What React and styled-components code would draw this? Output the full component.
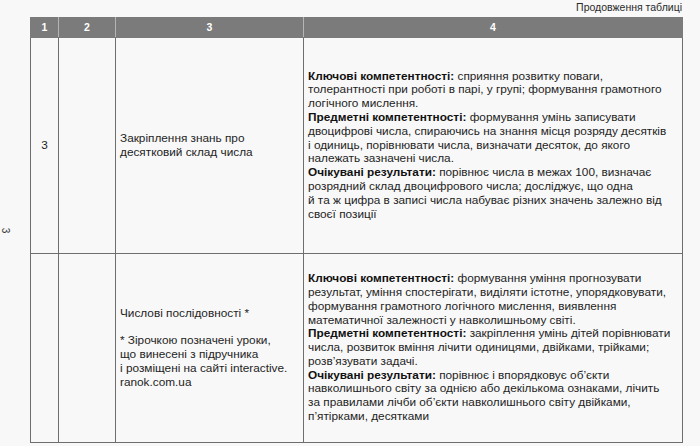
import styled, { createGlobalStyle } from 'styled-components'

const GlobalStyle = createGlobalStyle`
  html, body {
    margin: 0;
    padding: 0;
    background: #f8f8f8;
  }
  body {
    font-family: "Liberation Sans", Arial, sans-serif;
    color: #1e1e1e;
  }
`

const rows = [
  {
    num: '3',
    height: 216,
    topic: [['Закріплення знань про', 'десятковий склад числа']],
    blocks: [
      {
        label: 'Ключові компетентності:',
        lines: [
          'сприяння розвитку поваги,',
          'толерантності при роботі в парі, у групі; формування грамотного',
          'логічного мислення.'
        ]
      },
      {
        label: 'Предметні компетентності:',
        lines: [
          'формування умінь записувати',
          'двоцифрові числа, спираючись на знання місця розряду десятків',
          'і одиниць, порівнювати числа, визначати десяток, до якого',
          'належать зазначені числа.'
        ]
      },
      {
        label: 'Очікувані результати:',
        lines: [
          'порівнює числа в межах 100, визначає',
          'розрядний склад двоцифрового числа; досліджує, що одна',
          'й та ж цифра в записі числа набуває різних значень залежно від',
          'своєї позиції'
        ]
      }
    ]
  },
  {
    num: '',
    height: 189,
    topic: [
      ['Числові послідовності *'],
      [
        '* Зірочкою позначені уроки,',
        'що винесені з підручника',
        'і розміщені на сайті interactive.',
        'ranok.com.ua'
      ]
    ],
    blocks: [
      {
        label: 'Ключові компетентності:',
        lines: [
          'формування уміння прогнозувати',
          'результат, уміння спостерігати, виділяти істотне, упорядковувати,',
          'формування грамотного логічного мислення, виявлення',
          'математичної залежності у навколишньому світі.'
        ]
      },
      {
        label: 'Предметні компетентності:',
        lines: [
          'закріплення умінь дітей порівнювати',
          'числа, розвиток вміння лічити одиницями, двійками, трійками;',
          'розв’язувати задачі.'
        ]
      },
      {
        label: 'Очікувані результати:',
        lines: [
          'порівнює і впорядковує об’єкти',
          'навколишнього світу за однією або декількома ознаками, лічить',
          'за правилами лічби об’єкти навколишнього світу двійками,',
          'п’ятірками, десятками'
        ]
      }
    ]
  }
]

export default function App() {
  return (
    <>
      <GlobalStyle />
      <Page>
        <span />
        <Caption>Продовження таблиці</Caption>
        <Margin>
          <PageNumber>3</PageNumber>
        </Margin>
        <Table>
          <colgroup>
            <col style={{ width: 28 }} />
            <col style={{ width: 57 }} />
            <col style={{ width: 188 }} />
            <col style={{ width: 379 }} />
          </colgroup>
          <thead>
            <tr>
              <HeadCell>1</HeadCell>
              <HeadCell>2</HeadCell>
              <HeadCell>3</HeadCell>
              <HeadCell>4</HeadCell>
            </tr>
          </thead>
          <tbody>
            {rows.map((row, i) => (
              <tr key={i} style={{ height: row.height }}>
                <Cell $center>{row.num}</Cell>
                <Cell />
                <Cell>
                  {row.topic.map((para, j) => (
                    <Para key={j}>
                      {para.map((line, k) => (
                        <Line key={k}>{line}</Line>
                      ))}
                    </Para>
                  ))}
                </Cell>
                <Cell>
                  {row.blocks.map((block, j) => (
                    <div key={j}>
                      {block.lines.map((line, k) => (
                        <Line key={k}>
                          {k === 0 && <Label>{block.label}</Label>} {line}
                        </Line>
                      ))}
                    </div>
                  ))}
                </Cell>
              </tr>
            ))}
          </tbody>
        </Table>
      </Page>
    </>
  )
}

const Page = styled.div`
  display: grid;
  grid-template-columns: 30px 652px;
  grid-template-rows: 17px auto;
`

const Caption = styled.div`
  font-size: 10.5px;
  line-height: 14px;
  color: #2a2a2a;
  text-align: right;
`

const Margin = styled.div`
  display: flex;
  align-items: center;
  padding-left: 3px;
`

const PageNumber = styled.span`
  display: inline-block;
  transform: rotate(90deg);
  font-size: 10px;
  color: #333;
`

const Table = styled.table`
  border-collapse: collapse;
  table-layout: fixed;
  width: 652px;
  font-size: 11.8px;
  line-height: 13.8px;
`

const HeadCell = styled.th`
  height: 19px;
  padding: 0;
  background: #7b7b7b;
  color: #fff;
  font-size: 10.5px;
  font-weight: bold;
  text-align: center;
  border: 1px solid #7b7b7b;
  border-left-color: #b5b5b5;
  border-right-color: #b5b5b5;

  &:first-child {
    border-left-color: #7b7b7b;
  }

  &:last-child {
    border-right-color: #7b7b7b;
  }
`

const Cell = styled.td`
  padding: 0 4px;
  border: 1px solid #6e6e6e;
  vertical-align: middle;
  text-align: ${(p) => (p.$center ? 'center' : 'left')};
  color: #1e1e1e;
`

const Para = styled.div`
  & + & {
    margin-top: 13.8px;
  }
`

const Line = styled.div`
  white-space: nowrap;
`

const Label = styled.b`
  color: #111;
`
